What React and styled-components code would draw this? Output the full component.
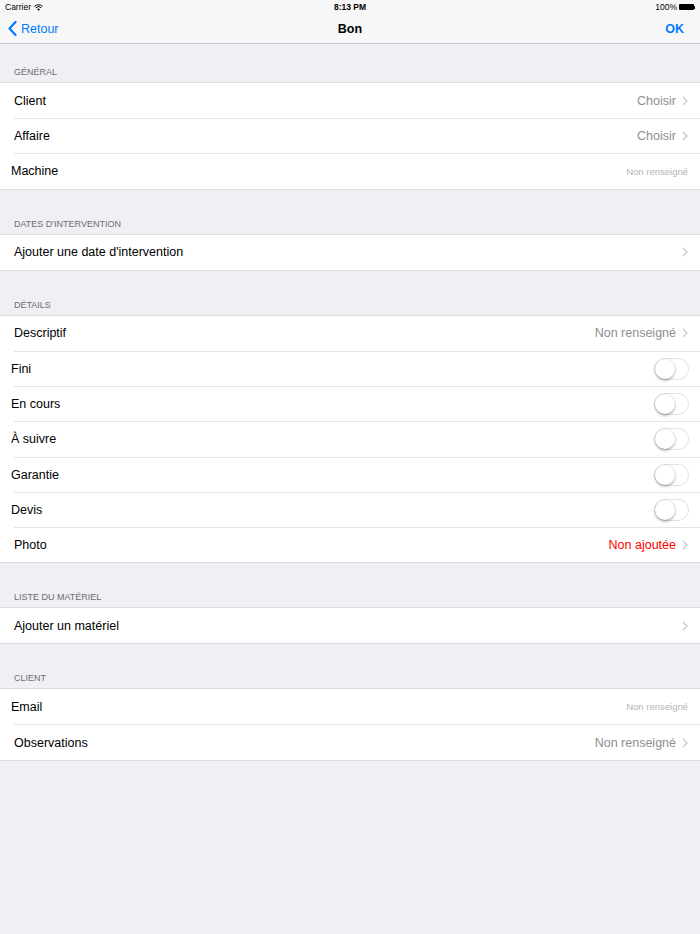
import styled, { createGlobalStyle } from "styled-components";

const GlobalStyle = createGlobalStyle`
  html, body {
    margin: 0;
    padding: 0;
    background: #efeff4;
    font-family: "Liberation Sans", Arial, sans-serif;
  }
`;

const sections = [
  {
    title: "Général",
    rows: [
      { label: "Client", value: "Choisir", chevron: true },
      { label: "Affaire", value: "Choisir", chevron: true },
      { label: "Machine", placeholder: "Non renseigné", tight: true },
    ],
  },
  {
    title: "Dates d'intervention",
    rows: [{ label: "Ajouter une date d'intervention", chevron: true }],
  },
  {
    title: "Détails",
    rows: [
      { label: "Descriptif", value: "Non renseigné", chevron: true },
      { label: "Fini", toggle: true, tight: true },
      { label: "En cours", toggle: true, tight: true },
      { label: "À suivre", toggle: true, tight: true },
      { label: "Garantie", toggle: true, tight: true },
      { label: "Devis", toggle: true, tight: true },
      { label: "Photo", value: "Non ajoutée", red: true, chevron: true },
    ],
  },
  {
    title: "Liste du matériel",
    rows: [{ label: "Ajouter un matériel", chevron: true }],
  },
  {
    title: "Client",
    rows: [
      { label: "Email", placeholder: "Non renseigné", tight: true },
      { label: "Observations", value: "Non renseigné", chevron: true },
    ],
  },
];

export default function App() {
  return (
    <Page>
      <GlobalStyle />
      <TopBar>
        <StatusBar>
          <StatusLeft>
            Carrier
            <svg width="9" height="7" viewBox="0 0 18 14">
              <path d="M9 13.5 L6.2 10.4 A4 4 0 0 1 11.8 10.4 Z" fill="#000" />
              <path d="M3.6 7.6 A7.6 7.6 0 0 1 14.4 7.6" stroke="#000" strokeWidth="2" fill="none" />
              <path d="M1 4.8 A11.4 11.4 0 0 1 17 4.8" stroke="#000" strokeWidth="2" fill="none" />
            </svg>
          </StatusLeft>
          <StatusCenter>8:13 PM</StatusCenter>
          <StatusRight>
            100%
            <Battery>
              <BatteryBody />
              <BatteryTip />
            </Battery>
          </StatusRight>
        </StatusBar>
        <NavBar>
          <BackButton>
            <svg width="9" height="15" viewBox="0 0 9 15">
              <path d="M7.5 1 L1.5 7.5 L7.5 14" stroke="#007aff" strokeWidth="2.2" fill="none" strokeLinecap="round" strokeLinejoin="round" />
            </svg>
            Retour
          </BackButton>
          <NavTitle>Bon</NavTitle>
          <DoneButton>OK</DoneButton>
        </NavBar>
      </TopBar>

      {sections.map((section, i) => (
        <Section key={section.title} $first={i === 0}>
          <SectionHeader>{section.title}</SectionHeader>
          <Group>
            {section.rows.map((row) => (
              <Row key={row.label}>
                <Label $tight={row.tight}>{row.label}</Label>
                <Accessory>
                  {row.value && <Value $red={row.red}>{row.value}</Value>}
                  {row.placeholder && <Placeholder>{row.placeholder}</Placeholder>}
                  {row.chevron && (
                    <svg width="6" height="10" viewBox="0 0 6 10">
                      <path d="M1 1 L5 5 L1 9" stroke="#c7c7cc" strokeWidth="1.3" fill="none" />
                    </svg>
                  )}
                  {row.toggle && (
                    <Switch>
                      <Knob />
                    </Switch>
                  )}
                </Accessory>
              </Row>
            ))}
          </Group>
        </Section>
      ))}
    </Page>
  );
}

const Page = styled.div`
  width: 700px;
  min-height: 934px;
  background: #efeff4;
`;

const TopBar = styled.div`
  background: #f7f7f7;
  border-bottom: 1px solid #c8c7cc;
`;

const StatusBar = styled.div`
  height: 14px;
  display: grid;
  grid-template-columns: 1fr auto 1fr;
  align-items: center;
  padding: 0 5px;
  font-size: 8.5px;
  color: #000;
`;

const StatusLeft = styled.div`
  display: flex;
  align-items: center;
  gap: 3px;
`;

const StatusCenter = styled.div`
  font-weight: bold;
  font-size: 8.5px;
`;

const StatusRight = styled.div`
  display: flex;
  justify-content: flex-end;
  align-items: center;
  gap: 2px;
`;

const Battery = styled.div`
  display: flex;
  align-items: center;
`;

const BatteryBody = styled.div`
  width: 15px;
  height: 6px;
  background: #000;
  border-radius: 1px;
`;

const BatteryTip = styled.div`
  width: 1px;
  height: 3px;
  background: #000;
`;

const NavBar = styled.div`
  height: 29px;
  display: grid;
  grid-template-columns: 1fr auto 1fr;
  align-items: center;
  padding: 0 16px 0 8px;
`;

const BackButton = styled.div`
  display: flex;
  align-items: center;
  gap: 4px;
  color: #007aff;
  font-size: 12.5px;
`;

const NavTitle = styled.div`
  font-weight: bold;
  font-size: 12.5px;
  color: #000;
  transform: translateX(4px);
`;

const DoneButton = styled.div`
  justify-self: end;
  color: #007aff;
  font-weight: bold;
  font-size: 12.5px;
`;

const Section = styled.section`
  padding-top: ${(p) => (p.$first ? "23px" : "29px")};
`;

const SectionHeader = styled.div`
  padding: 0 14px 4px;
  font-size: 9px;
  text-transform: uppercase;
  color: #6d6d72;
  line-height: 11px;
`;

const Group = styled.div`
  background: #fff;
  border-top: 1px solid #dcdce0;
  border-bottom: 1px solid #dcdce0;
`;

const Row = styled.div`
  height: 35.2px;
  display: flex;
  align-items: center;
  justify-content: space-between;
  padding-right: 12px;
  box-sizing: border-box;

  & + & {
    border-top: 1px solid #e4e4e7;
    margin-left: 14px;
  }
  & + & > span:first-child {
    margin-left: -14px;
  }
`;

const Label = styled.span`
  padding-left: ${(p) => (p.$tight ? "11px" : "14px")};
  font-size: 12.5px;
  color: #000;
`;

const Accessory = styled.div`
  display: flex;
  align-items: center;
  gap: 6px;
`;

const Value = styled.span`
  font-size: 12.5px;
  color: ${(p) => (p.$red ? "#ff0000" : "#8e8e93")};
`;

const Placeholder = styled.span`
  font-size: 9.5px;
  color: #b4b4b9;
`;

const Switch = styled.div`
  width: 33px;
  height: 20px;
  border-radius: 11px;
  border: 1px solid #e2e2e4;
  background: #fff;
  position: relative;
  margin-right: -1px;
`;

const Knob = styled.div`
  position: absolute;
  left: 0;
  top: 0;
  width: 20px;
  height: 20px;
  border-radius: 50%;
  background: #fff;
  box-shadow: 0 1.5px 3px rgba(0, 0, 0, 0.3), 0 0 0 0.5px rgba(0, 0, 0, 0.08);
`;
